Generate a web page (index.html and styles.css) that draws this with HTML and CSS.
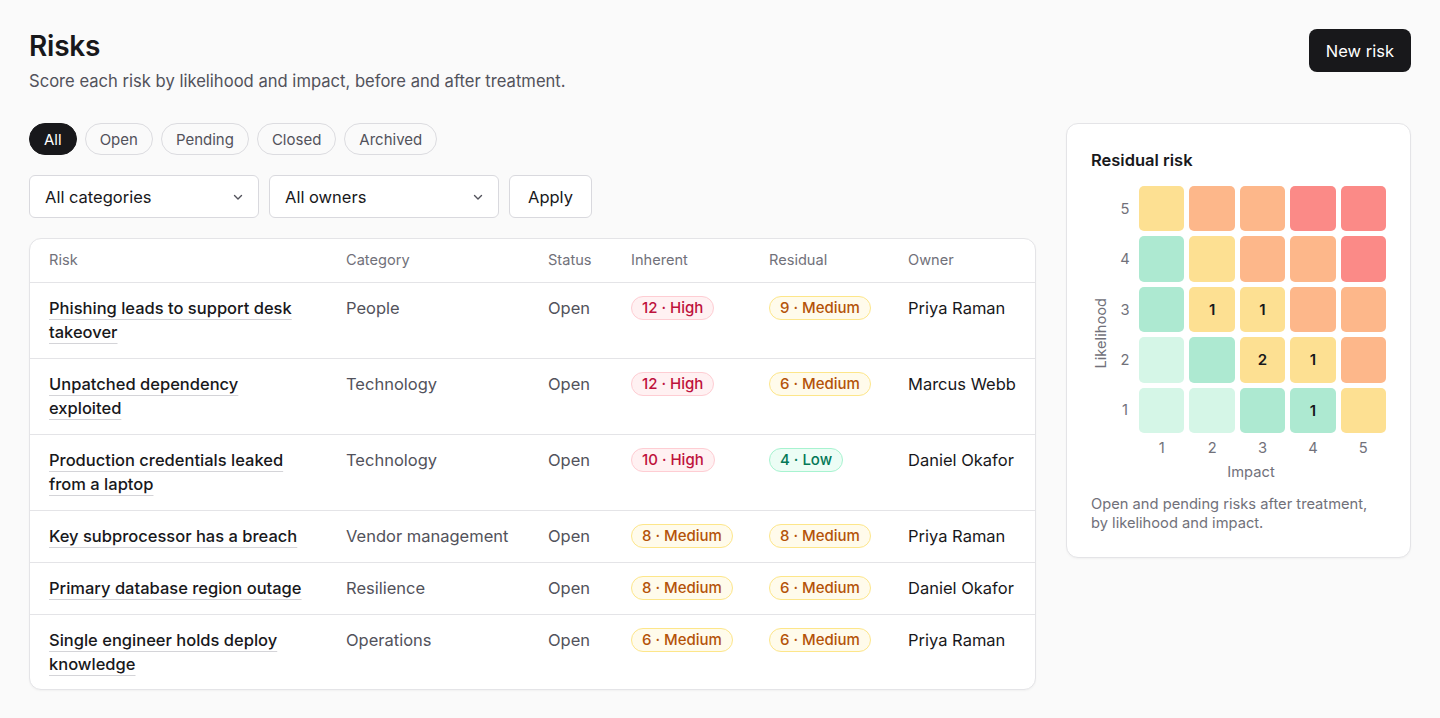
FILE: index.html
```html
<!DOCTYPE html>
<html lang="en">
<head>
<meta charset="utf-8">
<title>Risks</title>
<link rel="stylesheet" href="styles.css">
</head>
<body>
<header class="page-header">
  <div>
    <h1 class="title">Risks</h1>
    <p class="subtitle">Score each risk by likelihood and impact, before and after treatment.</p>
  </div>
  <button class="btn-primary">New risk</button>
</header>

<div class="content">
  <main class="main">
    <nav class="pills">
      <button class="pill active">All</button>
      <button class="pill">Open</button>
      <button class="pill">Pending</button>
      <button class="pill">Closed</button>
      <button class="pill">Archived</button>
    </nav>

    <div class="filters">
      <div class="select"><span>All categories</span>
        <svg class="chev" width="12" height="12" viewBox="0 0 12 12"><path d="M2.5 4.5l3.5 3.5 3.5-3.5" fill="none" stroke="#52525b" stroke-width="1.4" stroke-linecap="round" stroke-linejoin="round"/></svg>
      </div>
      <div class="select"><span>All owners</span>
        <svg class="chev" width="12" height="12" viewBox="0 0 12 12"><path d="M2.5 4.5l3.5 3.5 3.5-3.5" fill="none" stroke="#52525b" stroke-width="1.4" stroke-linecap="round" stroke-linejoin="round"/></svg>
      </div>
      <button class="btn-secondary">Apply</button>
    </div>

    <div class="table-card">
      <table class="risk-table">
        <colgroup>
          <col class="c-risk"><col class="c-cat"><col class="c-status"><col class="c-inh"><col class="c-res"><col class="c-owner">
        </colgroup>
        <thead>
          <tr><th>Risk</th><th>Category</th><th>Status</th><th>Inherent</th><th>Residual</th><th>Owner</th></tr>
        </thead>
        <tbody>
          <tr>
            <td><a class="risk-link" href="#">Phishing leads to support desk takeover</a></td>
            <td class="muted">People</td>
            <td class="muted">Open</td>
            <td><span class="badge high">12 · High</span></td>
            <td><span class="badge med">9 · Medium</span></td>
            <td>Priya Raman</td>
          </tr>
          <tr>
            <td><a class="risk-link" href="#">Unpatched dependency exploited</a></td>
            <td class="muted">Technology</td>
            <td class="muted">Open</td>
            <td><span class="badge high">12 · High</span></td>
            <td><span class="badge med">6 · Medium</span></td>
            <td>Marcus Webb</td>
          </tr>
          <tr>
            <td><a class="risk-link" href="#">Production credentials leaked from a laptop</a></td>
            <td class="muted">Technology</td>
            <td class="muted">Open</td>
            <td><span class="badge high">10 · High</span></td>
            <td><span class="badge low">4 · Low</span></td>
            <td>Daniel Okafor</td>
          </tr>
          <tr>
            <td><a class="risk-link" href="#">Key subprocessor has a breach</a></td>
            <td class="muted">Vendor management</td>
            <td class="muted">Open</td>
            <td><span class="badge med">8 · Medium</span></td>
            <td><span class="badge med">8 · Medium</span></td>
            <td>Priya Raman</td>
          </tr>
          <tr>
            <td><a class="risk-link" href="#">Primary database region outage</a></td>
            <td class="muted">Resilience</td>
            <td class="muted">Open</td>
            <td><span class="badge med">8 · Medium</span></td>
            <td><span class="badge med">6 · Medium</span></td>
            <td>Daniel Okafor</td>
          </tr>
          <tr>
            <td><a class="risk-link" href="#">Single engineer holds deploy knowledge</a></td>
            <td class="muted">Operations</td>
            <td class="muted">Open</td>
            <td><span class="badge med">6 · Medium</span></td>
            <td><span class="badge med">6 · Medium</span></td>
            <td>Priya Raman</td>
          </tr>
        </tbody>
      </table>
    </div>
  </main>

  <aside class="side-card">
    <h2 class="side-title">Residual risk</h2>
    <div class="matrix">
      <div class="axis-title-y">Likelihood</div>

      <div class="ynum">5</div>
      <div class="cell s-y"></div><div class="cell s-o"></div><div class="cell s-o"></div><div class="cell s-r"></div><div class="cell s-r"></div>

      <div class="ynum">4</div>
      <div class="cell s-g"></div><div class="cell s-y"></div><div class="cell s-o"></div><div class="cell s-o"></div><div class="cell s-r"></div>

      <div class="ynum">3</div>
      <div class="cell s-g"></div><div class="cell s-y">1</div><div class="cell s-y">1</div><div class="cell s-o"></div><div class="cell s-o"></div>

      <div class="ynum">2</div>
      <div class="cell s-l"></div><div class="cell s-g"></div><div class="cell s-y">2</div><div class="cell s-y">1</div><div class="cell s-o"></div>

      <div class="ynum">1</div>
      <div class="cell s-l"></div><div class="cell s-l"></div><div class="cell s-g"></div><div class="cell s-g">1</div><div class="cell s-y"></div>

      <div class="xnum first">1</div><div class="xnum">2</div><div class="xnum">3</div><div class="xnum">4</div><div class="xnum">5</div>
      <div class="axis-title-x">Impact</div>
    </div>
    <p class="side-caption">Open and pending risks after treatment, by likelihood and impact.</p>
  </aside>
</div>
</body>
</html>
```

FILE: styles.css
```css
* { box-sizing: border-box; }

html, body {
  margin: 0;
  background: #fafafa;
}

body {
  padding: 29px;
  font-family: Inter, "Noto Sans", "Liberation Sans", sans-serif;
  color: #18181b;
}

button {
  font-family: inherit;
  cursor: pointer;
}

.page-header {
  display: flex;
  justify-content: space-between;
  align-items: flex-start;
}

.title {
  margin: 0;
  font-size: 28px;
  line-height: 34px;
  font-weight: 600;
  letter-spacing: -0.2px;
}

.subtitle {
  margin: 6px 0 0;
  font-size: 16.6px;
  line-height: 24px;
  color: #52525b;
}

.btn-primary {
  height: 43px;
  padding: 0 17px;
  border: 0;
  border-radius: 8px;
  background: #18181b;
  color: #fff;
  font-size: 16.5px;
}

.content {
  display: flex;
  gap: 30px;
  margin-top: 30px;
  align-items: flex-start;
}

.main {
  flex: 1;
  min-width: 0;
}

.pills {
  display: flex;
  gap: 8px;
}

.pill {
  height: 32px;
  padding: 0 14px;
  border: 1px solid #dcdce0;
  border-radius: 999px;
  background: #fafafa;
  color: #52525b;
  font-size: 15px;
}

.pill.active {
  background: #18181b;
  border-color: #18181b;
  color: #fff;
}

.filters {
  display: flex;
  gap: 10px;
  margin-top: 20px;
}

.select {
  width: 230px;
  height: 43px;
  display: flex;
  align-items: center;
  justify-content: space-between;
  padding: 0 14px 0 15px;
  border: 1px solid #d9d9de;
  border-radius: 6px;
  background: #fff;
  font-size: 16.5px;
  color: #18181b;
}

.btn-secondary {
  height: 43px;
  padding: 0 18px;
  border: 1px solid #d9d9de;
  border-radius: 6px;
  background: #fff;
  color: #18181b;
  font-size: 16.5px;
}

.table-card {
  margin-top: 20px;
  background: #fff;
  border: 1px solid #e4e4e7;
  border-radius: 12px;
  overflow: hidden;
  box-shadow: 0 1px 2px rgba(0, 0, 0, 0.04);
}

.risk-table {
  width: 100%;
  border-collapse: collapse;
  table-layout: fixed;
}

.c-risk { width: 297px; }
.c-cat { width: 202px; }
.c-status { width: 83px; }
.c-inh { width: 138px; }
.c-res { width: 139px; }

.risk-table th {
  text-align: left;
  font-size: 14.6px;
  line-height: 20px;
  font-weight: 400;
  color: #71717a;
  padding: 11px 0 12px 19px;
  border-bottom: 1px solid #e4e4e7;
}

.risk-table td {
  vertical-align: top;
  font-size: 16.5px;
  line-height: 24px;
  padding: 13px 0 14px 19px;
  border-top: 1px solid #e4e4e7;
  color: #18181b;
}

.risk-table tbody tr:first-child td { border-top: 0; }
.risk-table tbody tr:last-child td { padding-bottom: 13px; }

.risk-table td:first-child { padding-right: 20px; }

.risk-table td.muted { color: #52525b; }

.risk-link {
  color: #18181b;
  font-weight: 500;
  text-decoration: underline;
  text-decoration-color: #d4d4d8;
  text-decoration-thickness: 1px;
  text-underline-offset: 5px;
}

.badge {
  display: inline-block;
  height: 24px;
  padding: 0 10px;
  border: 1px solid;
  border-radius: 999px;
  font-size: 15px;
  font-weight: 500;
  line-height: 22px;
  white-space: nowrap;
  vertical-align: top;
}

.badge.high { background: #fff1f2; border-color: #fecdd3; color: #be123c; }
.badge.med { background: #fffbeb; border-color: #fde68a; color: #b45309; }
.badge.low { background: #ecfdf5; border-color: #a7f3d0; color: #047857; }

.side-card {
  width: 345px;
  flex: none;
  background: #fff;
  border: 1px solid #e4e4e7;
  border-radius: 12px;
  padding: 24px;
  box-shadow: 0 1px 2px rgba(0, 0, 0, 0.04);
}

.side-title {
  margin: 0;
  font-size: 16.5px;
  line-height: 24px;
  font-weight: 600;
}

.matrix {
  margin-top: 14px;
  display: grid;
  grid-template-columns: 20px 18px repeat(5, 1fr);
  column-gap: 5px;
  row-gap: 5px;
}

.axis-title-y {
  grid-column: 1;
  grid-row: 1 / 8;
  writing-mode: vertical-rl;
  transform: rotate(180deg);
  align-self: center;
  justify-self: center;
  font-size: 14.7px;
  color: #71717a;
}

.ynum {
  grid-column: 2;
  align-self: center;
  text-align: center;
  font-size: 14.7px;
  color: #71717a;
}

.cell {
  aspect-ratio: 1 / 1;
  border-radius: 5px;
  display: flex;
  align-items: center;
  justify-content: center;
  font-size: 15px;
  font-weight: 600;
  color: #18181b;
}

.s-l { background: #d5f6e7; }
.s-g { background: #ade9d1; }
.s-y { background: #fde092; }
.s-o { background: #fdb78a; }
.s-r { background: #fb8a87; }

.xnum {
  text-align: center;
  font-size: 14.7px;
  line-height: 20px;
  color: #71717a;
}

.xnum.first { grid-column: 3; }

.axis-title-x {
  grid-column: 2 / 8;
  text-align: center;
  font-size: 14.7px;
  line-height: 18px;
  color: #71717a;
}

.side-caption {
  margin: 14px 0 0;
  font-size: 14.7px;
  line-height: 19px;
  color: #71717a;
}
```
